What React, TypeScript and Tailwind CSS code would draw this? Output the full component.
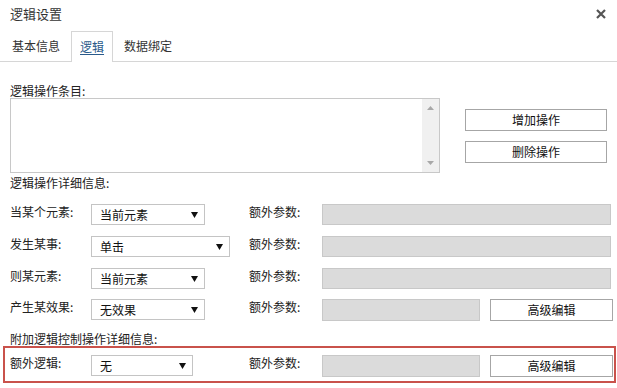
import React from 'react';

const Arrow = () => (
  <svg width="7" height="6" viewBox="0 0 7 6" className="shrink-0">
    <path d="M0 0 H7 L3.5 6 Z" fill="#111" />
  </svg>
);

const Select = ({ value, w }: { value: string; w: string }) => (
  <div className={`${w} h-[21px] border border-[#c4c4c4] bg-white flex items-center justify-between pl-[8px] pr-[6px]`}>
    <span className="text-[12px] leading-none text-[#111]">{value}</span>
    <Arrow />
  </div>
);

const Grey = ({ w }: { w: string }) => <div className={`${w} shrink-0 h-[21px] border border-[#c8c8c8] bg-[#dbdbdb]`} />;

const Btn = ({ label, w }: { label: string; w: string }) => (
  <div className={`${w} shrink-0 h-[22px] border border-[#a6a6a6] bg-white flex items-center justify-center text-[12px] text-[#111]`}>
    {label}
  </div>
);

const Row = ({ label, select, right }: { label: string; select: React.ReactNode; right: React.ReactNode }) => (
  <div className="flex items-start">
    <div className="w-[81px] shrink-0 h-[16px] leading-[16px] text-[12px] text-[#222]">{label}</div>
    <div className="w-[158px] shrink-0">{select}</div>
    <div className="w-[73px] shrink-0 h-[16px] leading-[16px] text-[12px] text-[#222]">额外参数:</div>
    {right}
  </div>
);

export default function App() {
  return (
    <div
      className="w-[617px] h-[388px] bg-white overflow-hidden text-[#222]"
      style={{ fontFamily: '"Noto Sans CJK SC", "Noto Sans", sans-serif' }}
    >
      {/* title bar */}
      <div className="h-[28px] flex items-center justify-between pl-[10px] pr-[11px]">
        <span className="text-[13px] text-[#333]">逻辑设置</span>
        <svg width="10" height="10" viewBox="0 0 10 10">
          <path d="M1 1 L9 9 M9 1 L1 9" stroke="#555" strokeWidth="2.2" />
        </svg>
      </div>

      {/* tabs */}
      <div className="mt-[3px] h-[31px] border-b border-[#d6d6d6] flex items-end pl-[4px] gap-[3px]">
        <div className="h-[30px] px-[8px] flex items-center text-[12px] text-[#333]">基本信息</div>
        <div className="h-[31px] -mb-px px-[8px] flex items-center border border-b-0 border-[#d6d6d6] bg-white text-[12px] text-[#2a5a8a] underline underline-offset-2">
          逻辑
        </div>
        <div className="h-[30px] px-[8px] flex items-center text-[12px] text-[#333]">数据绑定</div>
      </div>

      <div className="mt-[22px] px-[10px] h-[14px] leading-[14px] text-[12px]">逻辑操作条目:</div>

      <div className="flex items-start px-[10px] gap-[25px]">
        <div className="w-[430px] shrink-0 h-[75px] border border-[#c8c8c8] flex justify-end">
          <div className="w-[17px] h-full bg-[#f0f0f0] flex flex-col items-center justify-between py-[7px]">
            <svg width="7" height="4" viewBox="0 0 7 4"><path d="M0 4 L3.5 0 L7 4 Z" fill="#a8a8a8" /></svg>
            <svg width="7" height="4" viewBox="0 0 7 4"><path d="M0 0 L3.5 4 L7 0 Z" fill="#a8a8a8" /></svg>
          </div>
        </div>
        <div className="mt-[11px] flex flex-col gap-[10px]">
          <Btn label="增加操作" w="w-[142px]" />
          <Btn label="删除操作" w="w-[142px]" />
        </div>
      </div>

      <div className="mt-[3px] px-[10px] h-[14px] leading-[14px] text-[12px]">逻辑操作详细信息:</div>

      <div className="mt-[14px] pl-[10px] flex flex-col gap-[11px]">
        <Row label="当某个元素:" select={<Select value="当前元素" w="w-[114px]" />} right={<Grey w="w-[289px]" />} />
        <Row label="发生某事:" select={<Select value="单击" w="w-[139px]" />} right={<Grey w="w-[289px]" />} />
        <Row label="则某元素:" select={<Select value="当前元素" w="w-[114px]" />} right={<Grey w="w-[289px]" />} />
      </div>

      <div className="mt-[10px] pl-[10px]">
        <Row
          label="产生某效果:"
          select={<Select value="无效果" w="w-[114px]" />}
          right={
            <div className="flex gap-[10px] shrink-0">
              <Grey w="w-[158px] h-[22px]" />
              <Btn label="高级编辑" w="w-[123px]" />
            </div>
          }
        />
      </div>

      <div className="mt-[11px] px-[10px] h-[14px] leading-[14px] text-[12px]">附加逻辑控制操作详细信息:</div>

      <div className="ml-[3px] w-[613px] h-[37px] border-2 border-[#c9524b] pl-[5px] pt-[7px]">
        <Row
          label="额外逻辑:"
          select={<Select value="无" w="w-[102px]" />}
          right={
            <div className="flex gap-[10px] shrink-0">
              <Grey w="w-[158px] h-[22px]" />
              <Btn label="高级编辑" w="w-[123px]" />
            </div>
          }
        />
      </div>
    </div>
  );
}
